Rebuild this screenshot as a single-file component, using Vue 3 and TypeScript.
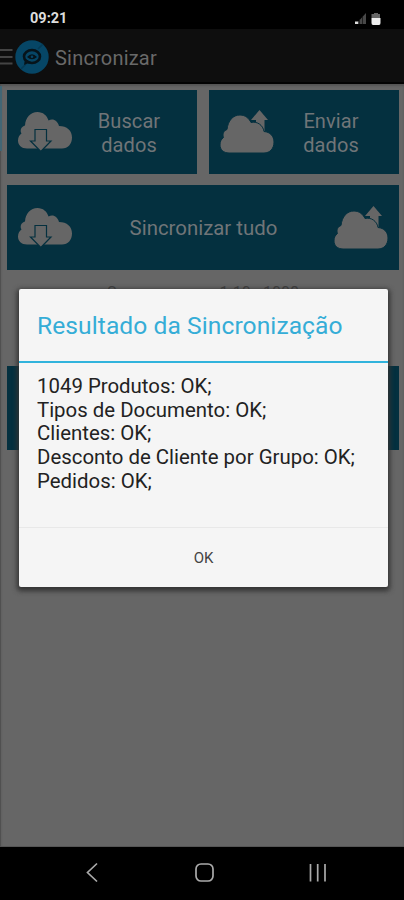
<script setup lang="ts">
import { defineComponent, h } from 'vue'

const results: string[] = [
  '1049 Produtos: OK;',
  'Tipos de Documento: OK;',
  'Clientes: OK;',
  'Desconto de Cliente por Grupo: OK;',
  'Pedidos: OK;',
]

const CloudDown = defineComponent({
  render: () =>
    h('svg', { width: 54, height: 40, viewBox: '0 0 54 40' }, [
      h('path', {
        fill: '#666',
        d: 'M9 36.500C3.500 36.500 0 33 0 28.500C0 25 1.500 23 3.500 21.500C1.500 18 3.500 14.500 7 13.500C7.500 5.500 12.500 0 19.500 0C25 0 29 3.500 30.500 8.500C35 6 39.500 8.500 41 14C49 14 54 18.500 54 25.500C54 32 50 36.500 44 36.500Z',
      }),
      h('path', {
        fill: '#666',
        stroke: '#04303f',
        'stroke-width': 1.2,
        d: 'M17 17.500H28.500V29H33L22.800 39.500L12.500 29H17Z',
      }),
    ]),
})

const CloudUp = defineComponent({
  render: () =>
    h('svg', { width: 54, height: 43, viewBox: '0 0 54 43' }, [
      h('path', { fill: '#666', d: 'M39.500 0L48 10H44.500V21H36V10H31Z' }),
      h('path', {
        fill: '#666',
        stroke: '#04303f',
        'stroke-width': 1,
        d: 'M9 43C3.500 43 0 39.500 0 35C0 31.500 1 29.500 3.500 27.500C2 24 4 20.500 7 19.500C8 10.500 13 5 20 5C25.500 5 29 8.500 31 12.500C37 11 43 15 44 21.500C50 22 54 26 54 32C54 38.500 50 43 44 43Z',
      }),
    ]),
})
</script>

<template>
  <div class="phone">
    <header class="status">
      <span class="time">09:21</span>
      <svg class="signals" width="28" height="14" viewBox="0 0 28 14">
        <path fill="#484848" d="M1 12L11 1V12Z" />
        <path fill="#ddd" d="M0 12V9.500H3V12Z" />
        <path stroke="#111" stroke-width=".7" d="M4.500 7V12M7.500 4V12" />
        <path fill="#666" d="M19 1H23V2H25V6H16.500V2H19Z" />
        <path fill="#eee" d="M16.500 6H25.500V11Q25.500 13 24 13H18Q16.500 13 16.500 11Z" />
      </svg>
    </header>
    <nav class="appbar">
      <svg class="menu" width="14" height="34" viewBox="0 0 14 34">
        <path stroke="#444" stroke-width="1.800" d="M0 10H12.500M0 17H12.500M0 23.500H12.500" />
      </svg>
      <svg class="logo" width="34" height="34" viewBox="0 0 34 34">
        <circle cx="17" cy="17" r="16.700" fill="#064666" />
        <path stroke="#053a54" stroke-width="1.500" d="M23 9L28 4M11 24L6 29" />
        <ellipse cx="17" cy="16.500" rx="8" ry="6.500" fill="none" stroke="#06131a" stroke-width="2.600" />
        <path fill="#06131a" d="M10 19L9 25L16 22Z" />
        <path fill="#06131a" d="M12 17Q17 11.500 22 17Q17 21.500 12 17" />
        <circle cx="17" cy="16.700" r="1.300" fill="#064666" />
      </svg>
      <h1>Sincronizar</h1>
    </nav>
    <main class="content">
      <div class="grid">
        <button class="tile"><CloudDown class="down" /><span class="label">Buscar<br />dados</span></button>
        <button class="tile"><CloudUp class="up" /><span class="label">Enviar<br />dados</span></button>
        <button class="tile wide"><CloudDown class="down" /><span class="label">Sincronizar tudo</span><CloudUp class="up" /></button>
      </div>
      <p class="info">Seu acesso em 1.10 - 1008</p>
      <div class="tile lower"></div>
      <section class="dialog">
        <h2>Resultado da Sincronização</h2>
        <div class="message"><p v-for="line in results" :key="line">{{ line }}</p></div>
        <button class="ok">OK</button>
      </section>
    </main>
    <footer class="softkeys">
      <svg width="404" height="53" viewBox="0 0 404 53" fill="none" stroke="#aaa" stroke-width="1.700">
        <path d="M97 16.500L87.500 25.500L97 34.500" />
        <rect x="196" y="17" width="17" height="17" rx="5" />
        <path d="M310.500 17V34.500M317.700 17V34.500M325 17V34.500" />
      </svg>
    </footer>
  </div>
</template>

<style>
body { margin: 0; background: #000; }
</style>

<style scoped>
.phone { width: 404px; height: 900px; display: flex; flex-direction: column; overflow: hidden; background: #000; font-family: Roboto, sans-serif; }
.phone * { box-sizing: border-box; }
h1, h2, p { margin: 0; font-weight: 400; }
button { border: 0; margin: 0; padding: 0; font-family: inherit; }
.status { height: 29px; flex: none; display: flex; justify-content: space-between; padding: 10px 21px 0 30px; color: #ddd; }
.time { font-size: 14.500px; line-height: 17px; font-weight: 700; }
.signals { margin-top: 2px; }
.appbar { height: 55px; flex: none; display: flex; align-items: center; background: #0e0e0e; border-bottom: 2px solid #030303; padding-top: 2px; }
.menu { margin-right: 1px; }
h1 { font-size: 20px; line-height: 26px; color: #696969; margin: 2px 0 0 6px; letter-spacing: .2px; }
.content { position: relative; height: 763px; flex: none; background: #666; border-left: 1px solid #505050; border-bottom: 1px solid #555; padding: 6px 5px 0 6px; box-shadow: inset 0 2px 2px #555; }
.content::before { content: ""; position: absolute; left: -1px; top: 2px; width: 2px; height: 65px; background: #416675; }
.grid { display: grid; grid-template-columns: 190px 190px; gap: 12px; row-gap: 11px; }
.tile { height: 84px; display: flex; align-items: center; background: #04303f; color: #707578; font-size: 20px; line-height: 24px; }
.tile.wide { grid-column: 1 / 3; height: 85px; font-size: 20.400px; }
.down { flex: none; margin: 0 0 0 11px; }
.up { flex: none; margin: 0 0 2px 11px; }
.label { flex: 1; text-align: center; padding-top: 2px; }
.tile:not(.wide) .label { padding-right: 11px; letter-spacing: .1px; }
.wide .label { padding: 1px 0 0 1px; }
.wide .up { margin: 0 11px 1px 0; }
.info { text-align: center; font-size: 16px; line-height: 22px; margin-top: 12px; color: #3d3d3d; }
.lower { margin-top: 62px; }
.dialog { position: absolute; left: 18px; top: 205px; width: 369px; height: 298px; background: #f5f5f5; border-radius: 2px; box-shadow: 0 2px 5px 2px #333; }
h2 { height: 74px; border-bottom: 2px solid #31b3dc; padding: 0 18px; font-size: 24.600px; letter-spacing: .07px; line-height: 74px; color: #35add7; white-space: nowrap; }
.message { height: 164px; padding: 12px 18px 0; font-size: 20.400px; line-height: 23.700px; color: #222; white-space: nowrap; }
.ok { display: block; width: 100%; height: 60px; border-top: 1px solid #e8e8e8; background: transparent; font-size: 15px; color: #444; }
.softkeys { height: 53px; flex: none; background: #000; }
</style>
